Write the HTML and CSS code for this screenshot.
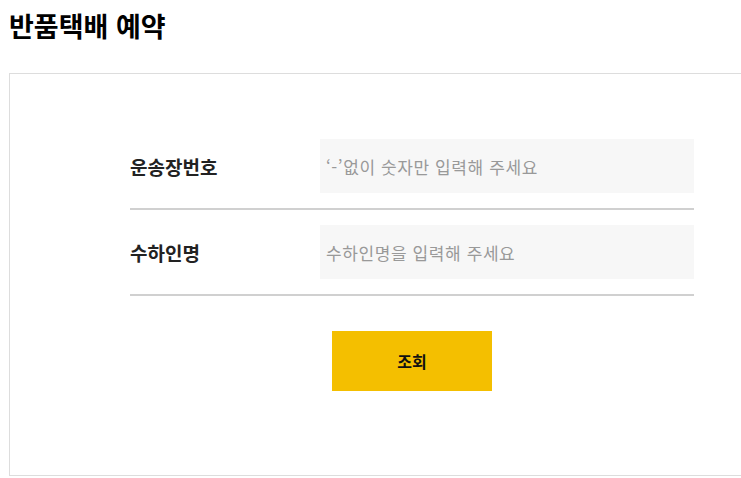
FILE: index.html
```html
<!DOCTYPE html>
<html lang="ko">
<head>
    <meta charset="UTF-8">
    <meta name="viewport" content="width=device-width, initial-scale=1.0">
    <title>반품택배 예약</title>
    <link rel="stylesheet" href="styles.css">
</head>
<body>
    <div class="page">
        <h1 class="page-title">반품택배 예약</h1>

        <div class="box">
            <form class="return-form" onsubmit="return false">
                <div class="form-row">
                    <label class="form-label" for="invoice">운송장번호</label>
                    <input class="form-input" type="text" id="invoice" placeholder="‘-’없이 숫자만 입력해 주세요">
                </div>
                <div class="form-row">
                    <label class="form-label" for="receiver">수하인명</label>
                    <input class="form-input" type="text" id="receiver" placeholder="수하인명을 입력해 주세요">
                </div>
                <div class="form-actions">
                    <button class="btn-search" type="submit">조회</button>
                </div>
            </form>
        </div>
    </div>
</body>
</html>
```

FILE: styles.css
```css
* {
    margin: 0;
    padding: 0;
    box-sizing: border-box;
}
body {
    background-color: #fff;
    color: #111;
    font-family: "Noto Sans CJK KR", "Noto Sans", sans-serif;
    overflow: hidden;
}
.page {
    padding: 8px 0 0 9px;
}
.page-title {
    font-size: 27px;
    font-weight: 700;
    line-height: 36px;
    color: #000;
}
/* 오른쪽 테두리는 화면 밖으로 이어짐 */
.box {
    height: 403px;
    margin-top: 29px;
    border: 1px solid #ddd;
    border-right: 0;
    padding-top: 50px;
}
.return-form {
    width: 564px;
    margin-left: 120px;
}
.form-row {
    display: grid;
    grid-template-columns: 190px 1fr;
    align-items: center;
    padding: 15px 0;
    border-bottom: 2px solid #d0d0d0;
}
.form-label {
    font-size: 19px;
    font-weight: 700;
    color: #222;
}
.form-input {
    height: 54px;
    border: 0;
    outline: none;
    background-color: #f7f7f7;
    padding: 0 6px;
    font-family: inherit;
    font-size: 17px;
    letter-spacing: 0.6px;
    color: #333;
}
.form-input::placeholder {
    color: #999;
}
.form-actions {
    display: flex;
    justify-content: center;
    padding-top: 35px;
}
.btn-search {
    width: 160px;
    height: 60px;
    border: 0;
    background-color: #f4bf00;
    font-family: inherit;
    font-size: 16px;
    font-weight: 700;
    color: #111;
    cursor: pointer;
}
```
